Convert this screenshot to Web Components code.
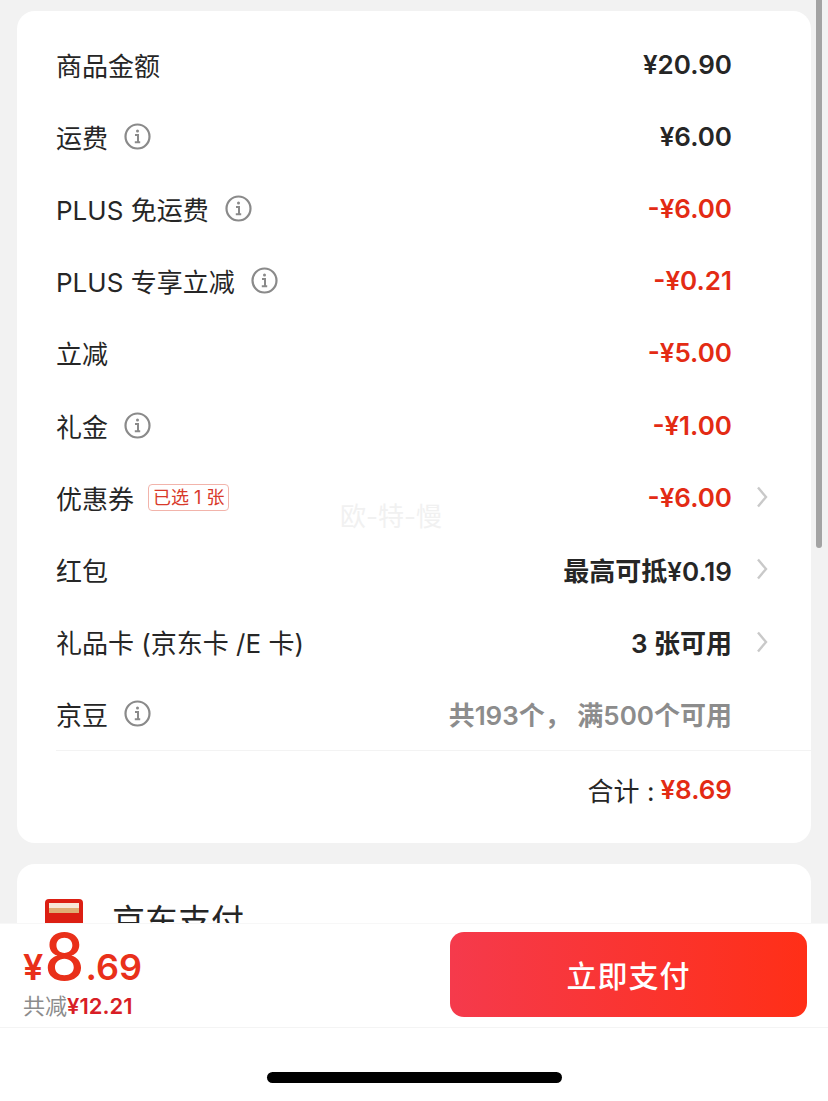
<!DOCTYPE html>
<html lang="zh">
<head>
<meta charset="utf-8">
<style>
html, body { margin: 0; height: 100%; }
body { background: #f2f2f2; font-family: "Inter", "Noto Sans CJK SC", sans-serif; color: #262626; overflow: hidden; }
</style>
</head>
<body>
<checkout-page>
  <fee-card>
    <fee-row label="商品金额">¥20.90</fee-row>
    <fee-row label="运费" info>¥6.00</fee-row>
    <fee-row label="PLUS 免运费" info tone="red">-¥6.00</fee-row>
    <fee-row label="PLUS 专享立减" info tone="red">-¥0.21</fee-row>
    <fee-row label="立减" tone="red">-¥5.00</fee-row>
    <fee-row label="礼金" info tone="red">-¥1.00</fee-row>
    <fee-row label="优惠券" tag="已选 1 张" arrow tone="red">-¥6.00</fee-row>
    <fee-row label="红包" arrow>最高可抵¥0.19</fee-row>
    <fee-row label="礼品卡 (京东卡 /E 卡)" arrow>3 张可用</fee-row>
    <fee-row label="京豆" info tone="gray">共193个， 满500个可用</fee-row>
    <fee-total amount="¥8.69"></fee-total>
  </fee-card>
  <pay-method>京东支付</pay-method>
  <pay-bar slot="bar" price="8" cents=".69" saved="¥12.21">立即支付</pay-bar>
</checkout-page>

<script>
const css = (s) => `<style>${s}</style>`;

class CheckoutPage extends HTMLElement {
  constructor() {
    super();
    this.attachShadow({ mode: 'open' }).innerHTML = css(`
      :host { display: flex; flex-direction: column; height: 1101px; position: relative; }
      .scroll { height: 923px; overflow: hidden; padding: 11px 17px 0; box-sizing: border-box; flex: none; }
      .bar { position: absolute; right: 6px; top: 0; width: 6px; height: 548px; background: #a3a3a3; border-radius: 0 0 3px 3px; }
      .mark { position: absolute; left: 340px; top: 500px; font-size: 26px; line-height: 34px; color: #f1f1f1; white-space: nowrap; }
    `) + `
      <div class="scroll"><slot></slot></div>
      <slot name="bar"></slot>
      <div class="bar"></div>
      <div class="mark">欧-特-慢</div>`;
  }
}

class FeeCard extends HTMLElement {
  constructor() {
    super();
    this.attachShadow({ mode: 'open' }).innerHTML = css(`
      :host { display: block; background: #fff; border-radius: 18px; padding: 17px 0 14px; margin-bottom: 21px; }
    `) + `<slot></slot>`;
  }
}

class FeeRow extends HTMLElement {
  constructor() {
    super();
    const tone = { red: '#e32b14', gray: '#8c8c8c' }[this.getAttribute('tone')] || '#262626';
    const tag = this.getAttribute('tag');
    this.attachShadow({ mode: 'open' }).innerHTML = css(`
      :host { display: flex; align-items: center; height: 72.2px; padding-left: 39px; font-size: 26px; }
      .label { white-space: nowrap; }
      .info { margin-left: 16px; width: 27px; height: 27px; flex: none; }
      .tag { margin-left: 14px; height: 25px; padding: 0 4px; border: 1px solid #f2b4ab; border-radius: 4px; font-size: 18px; line-height: 25px; color: #d8392a; white-space: nowrap; }
      .value { margin-left: auto; font-weight: 600; white-space: nowrap; color: ${tone}; }
      .end { width: 79px; flex: none; display: flex; padding-left: 24px; box-sizing: border-box; }
      .end svg { width: 12px; height: 22px; }
    `) + `
      <span class="label">${this.getAttribute('label')}</span>
      ${this.hasAttribute('info') ? `<svg class="info" viewBox="0 0 27 27" fill="none">
        <circle cx="13.5" cy="13.5" r="12" stroke="#8a8a8a" stroke-width="2.2"/>
        <circle cx="13.5" cy="8" r="1.5" fill="#8a8a8a"/>
        <path d="M11 12h3v7M10.8 19.2h5.4" stroke="#8a8a8a" stroke-width="2"/>
      </svg>` : ''}
      ${tag ? `<span class="tag">${tag}</span>` : ''}
      <span class="value"><slot></slot></span>
      <span class="end">${this.hasAttribute('arrow') ? `<svg viewBox="0 0 12 22" fill="none">
        <path d="M2 1.5 10 11 2 20.5" stroke="#c9c9c9" stroke-width="2.4"/>
      </svg>` : ''}</span>`;
  }
}

class FeeTotal extends HTMLElement {
  constructor() {
    super();
    this.attachShadow({ mode: 'open' }).innerHTML = css(`
      :host { display: flex; justify-content: flex-end; align-items: center; height: 78px; margin-left: 39px; padding-right: 79px; border-top: 1px solid #f3f3f3; font-size: 26px; white-space: nowrap; }
      b { font-weight: 600; color: #e32b14; margin-left: 6px; }
    `) + `<span>合计 :</span><b>${this.getAttribute('amount')}</b>`;
  }
}

class PayMethod extends HTMLElement {
  constructor() {
    super();
    this.attachShadow({ mode: 'open' }).innerHTML = css(`
      :host { display: flex; align-items: flex-start; height: 200px; background: #fff; border-radius: 18px; padding: 35px 0 0 28px; box-sizing: border-box; font-size: 33px; line-height: 46px; }
      svg { width: 38px; height: 34px; margin-right: 29px; flex: none; }
      span { margin-top: -1px; }
    `) + `
      <svg viewBox="0 0 38 34">
        <rect width="38" height="34" rx="4" fill="#dc1f13"/>
        <rect x="4" y="4" width="30" height="5" fill="#f8e8d8"/>
        <rect x="4" y="9" width="30" height="5" fill="#dfae74"/>
      </svg>
      <span><slot></slot></span>`;
  }
}

class PayBar extends HTMLElement {
  constructor() {
    super();
    this.attachShadow({ mode: 'open' }).innerHTML = css(`
      :host { display: block; background: #fff; flex: 1; }
      .top { display: flex; justify-content: space-between; align-items: center; height: 105px; padding: 0 21px 0 23px; box-sizing: border-box; border-top: 1px solid #f7f7f7; border-bottom: 1px solid #f4f4f4; }
      .price { display: flex; align-items: baseline; color: #e9301a; font-weight: 600; font-size: 36px; line-height: 52px; white-space: nowrap; margin-top: -2px; }
      .big { font-size: 64px; font-weight: 500; margin: 0 1px; }
      .save { font-size: 22px; line-height: 26px; color: #8c8c8c; white-space: nowrap; }
      .save b { color: #d81e26; font-weight: 600; }
      button { width: 357px; height: 85px; border: 0; border-radius: 14px; background: linear-gradient(90deg, #f53a4c, #ff2f17); color: #fff; font: 500 30px "Noto Sans CJK SC", sans-serif; letter-spacing: 1px; padding: 0; margin-bottom: 3px; }
      .home { display: flex; justify-content: flex-start; padding: 44px 0 0 267px; }
      .home i { display: block; width: 295px; height: 11px; border-radius: 6px; background: #000; }
    `) + `
      <div class="top">
        <div>
          <div class="price">¥<span class="big">${this.getAttribute('price')}</span>${this.getAttribute('cents')}</div>
          <div class="save">共减<b>${this.getAttribute('saved')}</b></div>
        </div>
        <button><slot></slot></button>
      </div>
      <div class="home"><i></i></div>`;
  }
}

customElements.define('checkout-page', CheckoutPage);
customElements.define('fee-card', FeeCard);
customElements.define('fee-row', FeeRow);
customElements.define('fee-total', FeeTotal);
customElements.define('pay-method', PayMethod);
customElements.define('pay-bar', PayBar);
</script>
</body>
</html>
